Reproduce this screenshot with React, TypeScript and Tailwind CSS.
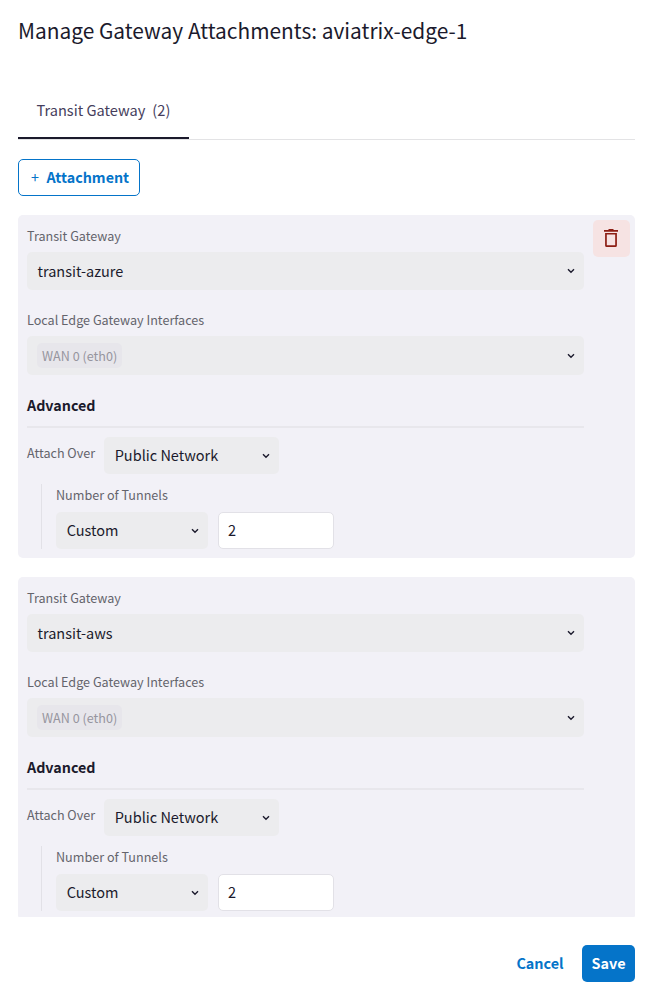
import React from "react";

function Chevron() {
  return (
    <svg width="8" height="6" viewBox="0 0 8 6" fill="none" className="shrink-0">
      <path d="M1 1.2 L4 4.2 L7 1.2" stroke="#1b1a2c" strokeWidth="1.4" />
    </svg>
  );
}

function TrashIcon() {
  return (
    <svg width="15" height="18" viewBox="0 0 15 18" fill="#8c1d13">
      <path d="M4.5 0h5v1H14v1.8H0V1h4.5z" />
      <path fillRule="evenodd" d="M1.1 4h11.8v12.4a1.6 1.6 0 0 1-1.6 1.6H2.7a1.6 1.6 0 0 1-1.6-1.6zM2.8 5.6v10.7h8.4V5.6z" />
    </svg>
  );
}

function Label({ children }: { children: React.ReactNode }) {
  return <div className="h-5 text-[12.6px] leading-5 text-[#64646c]">{children}</div>;
}

function Attachment({ name, removable }: { name: string; removable?: boolean }) {
  return (
    <section className="flex h-[343px] shrink-0 justify-between rounded-[5px] bg-[#f2f1f7] pr-[5px] pl-[9px]">
      <div className="w-[557px] pt-[11px]">
        <Label>Transit Gateway</Label>
        <div className="mt-[6px] flex h-[38px] items-center justify-between rounded-[5px] bg-[#ececee] pr-[9px] pl-[10.5px]">
          <span className="text-[14.5px] leading-5">{name}</span>
          <Chevron />
        </div>
        <div className="mt-[20px]">
          <Label>Local Edge Gateway Interfaces</Label>
        </div>
        <div className="mt-[6px] flex h-[39px] items-center justify-between rounded-[5px] bg-[#ececee] pr-[9px] pl-[10px]">
          <span className="h-[25px] w-[85px] rounded-[5px] bg-[#e7e6eb] pl-[5px] text-[12.6px] leading-[25px] whitespace-nowrap text-[#96959e]">WAN 0 (eth0)</span>
          <Chevron />
        </div>
        <div className="mt-[20px] h-5 text-[14.3px] leading-5 font-bold">Advanced</div>
        <div className="mt-[11px] h-[2px] bg-[#e8e7ec]" />
        <div className="mt-[9px] flex">
          <div className="w-[77px] pt-[6px]">
            <Label>Attach Over</Label>
          </div>
          <div className="flex h-[37px] w-[175px] items-center justify-between rounded-[5px] bg-[#ececee] pr-[9px] pl-[10.7px]">
            <span className="h-[21px] text-[14.5px] leading-[19px]">Public Network</span>
            <Chevron />
          </div>
        </div>
        <div className="mt-[10px] ml-[14px] h-[65px] border-l border-[#e2e1e7] pt-px pl-[14px]">
          <Label>Number of Tunnels</Label>
          <div className="mt-[7px] flex gap-[10px]">
            <div className="flex h-[37px] w-[152px] items-center justify-between rounded-[5px] bg-[#ececee] pr-[9px] pl-[10.7px]">
              <span className="h-[21px] text-[14.5px] leading-[19px]">Custom</span>
              <Chevron />
            </div>
            <div className="h-[37px] w-[116px] rounded-[5px] border border-[#e2e1e7] bg-white pt-[7px] pl-[9px] text-[14.5px] leading-[19px]">2</div>
          </div>
        </div>
      </div>
      {removable && (
        <button className="mt-[5px] flex h-[37px] w-[37px] items-start justify-center rounded-[5px] bg-[#f6e3e3] pt-[9px]">
          <TrashIcon />
        </button>
      )}
    </section>
  );
}

export default function App() {
  return (
    <main className="flex h-[1000px] w-[650px] flex-col bg-white pr-[15px] pl-[18px] font-['Noto_Sans_CJK_SC',sans-serif] text-[#1b1a2c]">
      <h1 className="mt-[15px] h-[31px] text-[20.9px] leading-[30px] whitespace-nowrap">Manage Gateway Attachments: aviatrix-edge-1</h1>
      <div className="mt-[38px] flex h-[56px] shrink-0 border-b border-[#e3e3e5]">
        <div className="flex h-[55px] w-[171px] gap-[7px] border-b-2 border-[#1b1a2c] pt-[16px] pl-[18.5px] text-[14.6px] leading-5 whitespace-nowrap text-[#463e5c]">
          <span>Transit Gateway</span>
          <span>(2)</span>
        </div>
      </div>
      <button className="mt-[19px] flex h-[37px] w-[122px] shrink-0 items-start gap-[7.5px] rounded-[5px] border border-[#0574c9] pt-[7px] pl-[12px] text-[14.3px] leading-5 font-bold text-[#0574c9]">
        <span className="font-normal">+</span>
        <span>Attachment</span>
      </button>
      <div className="mt-[19px] flex h-[702px] shrink-0 flex-col gap-[19px] overflow-hidden">
        <Attachment name="transit-azure" removable />
        <Attachment name="transit-aws" />
      </div>
      <footer className="mt-[28px] flex h-[37px] justify-end text-[14.4px] leading-5 font-bold">
        <button className="w-[84px] pb-[2px] text-center text-[#0574c9]">Cancel</button>
        <button className="h-[37px] w-[53px] rounded-[5px] bg-[#0574c9] pb-[2px] text-white">Save</button>
      </footer>
    </main>
  );
}
